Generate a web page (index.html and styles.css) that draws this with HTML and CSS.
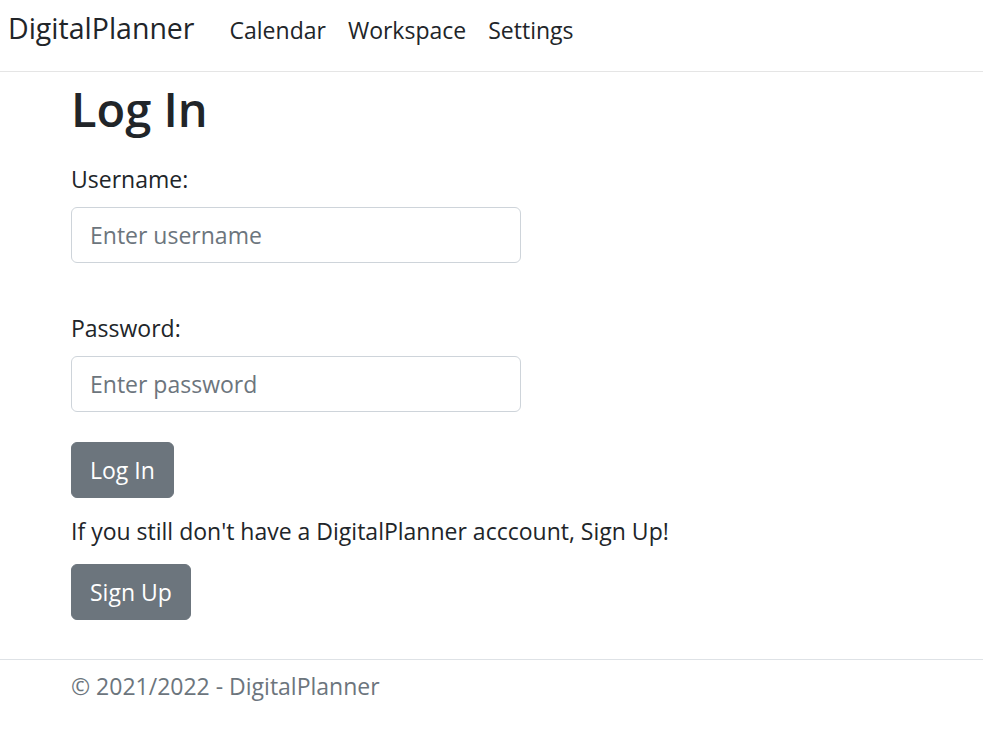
FILE: index.html
```html
<!DOCTYPE html>
<html lang="en">
<head>
<meta charset="utf-8">
<title>Log In - DigitalPlanner</title>
<link rel="stylesheet" href="styles.css">
</head>
<body>
<header class="site-header">
  <nav class="navbar">
    <a class="brand" href="#">DigitalPlanner</a>
    <ul class="nav-links">
      <li><a class="nav-link" href="#">Calendar</a></li>
      <li><a class="nav-link" href="#">Workspace</a></li>
      <li><a class="nav-link" href="#">Settings</a></li>
    </ul>
  </nav>
</header>
<main class="container">
  <h1 class="title">Log In</h1>
  <form class="login-form">
    <div class="form-group">
      <label class="form-label" for="username">Username:</label>
      <input class="form-control" id="username" type="text" placeholder="Enter username">
    </div>
    <div class="form-group">
      <label class="form-label" for="password">Password:</label>
      <input class="form-control" id="password" type="password" placeholder="Enter password">
    </div>
    <button class="btn" type="button">Log In</button>
  </form>
  <p class="signup-text">If you still don't have a DigitalPlanner acccount, Sign Up!</p>
  <button class="btn" type="button">Sign Up</button>
</main>
<footer class="site-footer">
  <div class="container">&copy; 2021/2022 - DigitalPlanner</div>
</footer>
</body>
</html>
```
FILE: styles.css
```css
* { box-sizing: border-box; }
html, body { margin: 0; padding: 0; }
body {
  font-family: "Open Sans", "Noto Sans", sans-serif;
  font-size: 23px;
  line-height: 36px;
  color: #212529;
  background: #fff;
}
.site-header {
  border-bottom: 1px solid #e5e5e5;
}
.navbar {
  display: flex;
  align-items: baseline;
  height: 71px;
  padding: 6px 8px 0;
}
.brand {
  font-size: 28.5px;
  line-height: 45px;
  color: #212529;
  text-decoration: none;
  margin-right: 24px;
}
.nav-links {
  display: flex;
  list-style: none;
  margin: 0;
  padding: 0;
}
.nav-link {
  display: block;
  padding: 0 11px;
  color: #212529;
  text-decoration: none;
}
.container {
  padding: 0 71px;
}
.title {
  font-size: 47px;
  font-weight: 600;
  line-height: 58px;
  margin: 8px 0 0;
}
.form-label {
  display: block;
  margin-top: 23px;
  margin-bottom: 10px;
}
.form-group + .form-group .form-label { margin-top: 47px; }
.form-control {
  display: block;
  width: 450px;
  height: 56px;
  padding: 9px 18px;
  font: inherit;
  color: #212529;
  border: 1px solid #ced4da;
  border-radius: 6px;
  background: #fff;
}
.form-control::placeholder { color: #6c757d; opacity: 1; }
.btn {
  display: block;
  height: 56px;
  padding: 9px 18px;
  font: inherit;
  color: #fff;
  background: #6c757d;
  border: 1px solid #6c757d;
  border-radius: 6px;
}
.login-form .btn { margin-top: 30px; }
.signup-text { margin: 15px 0 15px; }
.site-footer {
  margin-top: 39px;
  border-top: 1px solid #dee2e6;
  color: #6c757d;
  line-height: 52px;
}
```
